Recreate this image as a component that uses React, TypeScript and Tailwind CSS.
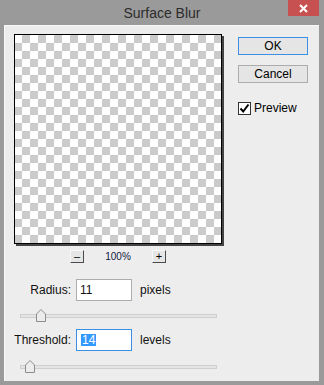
import React from 'react'

function Thumb() {
    return (
        <svg width="10" height="13" viewBox="0 0 10 13" className="block">
            <path d="M0.5 12.5 V5 L5 0.5 L9.5 5 V12.5 Z" fill="#ececec" stroke="#8c8c8c" strokeWidth="1" />
        </svg>
    )
}

function Slider({ thumbLeft }: { thumbLeft: string }) {
    return (
        <div className="relative ml-[16px] w-[197px] h-[13px] pt-[5px]">
            <div className="h-[4px] bg-[#e4e4e4] border border-[#cfcfcf]" />
            <div className={`absolute top-0 ${thumbLeft}`}>
                <Thumb />
            </div>
        </div>
    )
}

function SmallButton({ label }: { label: string }) {
    return (
        <div className="w-[14px] h-[13px] flex items-center justify-center bg-[#e6e6e6] border-t border-l border-[#f8f8f8] border-r-[#4a4a4a] border-b-[#4a4a4a] border-r border-b text-[11px] leading-none text-black">
            {label}
        </div>
    )
}

export default function App() {
    return (
        <div className="w-[324px] h-[385px] bg-[#9a9a9a] flex flex-col font-['Liberation_Sans',Arial,sans-serif] text-[12px] text-[#111]">
            {/* Title bar */}
            <div className="relative h-[25px] flex items-center justify-center">
                <span className="text-[14px] text-[#2c2c2c] leading-none">Surface Blur</span>
                <div className="absolute top-0 right-[5px] w-[31px] h-[16px] bg-[#c75050] flex items-center justify-center">
                    <svg width="9" height="9" viewBox="0 0 9 9">
                        <path d="M1 1 L8 8 M8 1 L1 8" stroke="#fff" strokeWidth="2" />
                    </svg>
                </div>
            </div>

            {/* Dialog body */}
            <div className="ml-[4px] mr-[5px] h-[356px] bg-[#ededed] shadow-[inset_1px_1px_0_#f8f8f8] flex flex-col">
                <div className="flex">
                    <div className="pl-[10px] pt-[9px] flex flex-col">
                        <div className="w-[208px] h-[210px] border border-black shadow-[2px_2px_0_#444] bg-[conic-gradient(#cbcbcb_25%,#fff_0_50%,#cbcbcb_0_75%,#fff_0)] bg-[length:16px_16px] bg-[position:-1px_0]" />
                        <div className="mt-[6px] flex justify-center items-center">
                            <SmallButton label="–" />
                            <div className="w-[68px] text-center text-[10px] leading-none text-[#102040]">100%</div>
                            <SmallButton label="+" />
                        </div>
                    </div>
                    <div className="ml-[16px] pt-[12px] w-[70px] flex flex-col">
                        <div className="h-[18px] flex items-center justify-center bg-[#e5e5e5] border border-[#3d8ee6] text-[12px] text-black">OK</div>
                        <div className="mt-[10px] h-[18px] flex items-center justify-center bg-[#e5e5e5] border border-[#acacac] text-[12px] text-black">Cancel</div>
                        <div className="mt-[16px] flex items-center">
                            <div className="w-[13px] h-[13px] bg-white border border-[#333] flex items-center justify-center">
                                <svg width="11" height="11" viewBox="0 0 11 11">
                                    <path d="M1.5 5.5 L4.2 8.5 L9.5 1.5" fill="none" stroke="#000" strokeWidth="2" />
                                </svg>
                            </div>
                            <span className="ml-[3px] text-[12px] text-black">Preview</span>
                        </div>
                    </div>
                </div>

                {/* Radius */}
                <div className="mt-[16px] flex items-center h-[22px]">
                    <div className="w-[67px] text-right">Radius:</div>
                    <div className="ml-[5px] w-[56px] h-[22px] bg-white border border-[#acacac] flex items-center pl-[3px]">11</div>
                    <div className="ml-[8px]">pixels</div>
                </div>
                <div className="mt-[8px]">
                    <Slider thumbLeft="left-[16px]" />
                </div>

                {/* Threshold */}
                <div className="mt-[7px] flex items-center h-[22px]">
                    <div className="w-[67px] text-right">Threshold:</div>
                    <div className="ml-[5px] w-[56px] h-[22px] bg-white border border-[#3d8ee6] flex items-center pl-[4px]">
                        <span className="bg-[#3399ff] text-white px-[1px] leading-[12px]">14</span>
                    </div>
                    <div className="ml-[8px]">levels</div>
                </div>
                <div className="mt-[9px]">
                    <Slider thumbLeft="left-[5px]" />
                </div>
            </div>
        </div>
    )
}
